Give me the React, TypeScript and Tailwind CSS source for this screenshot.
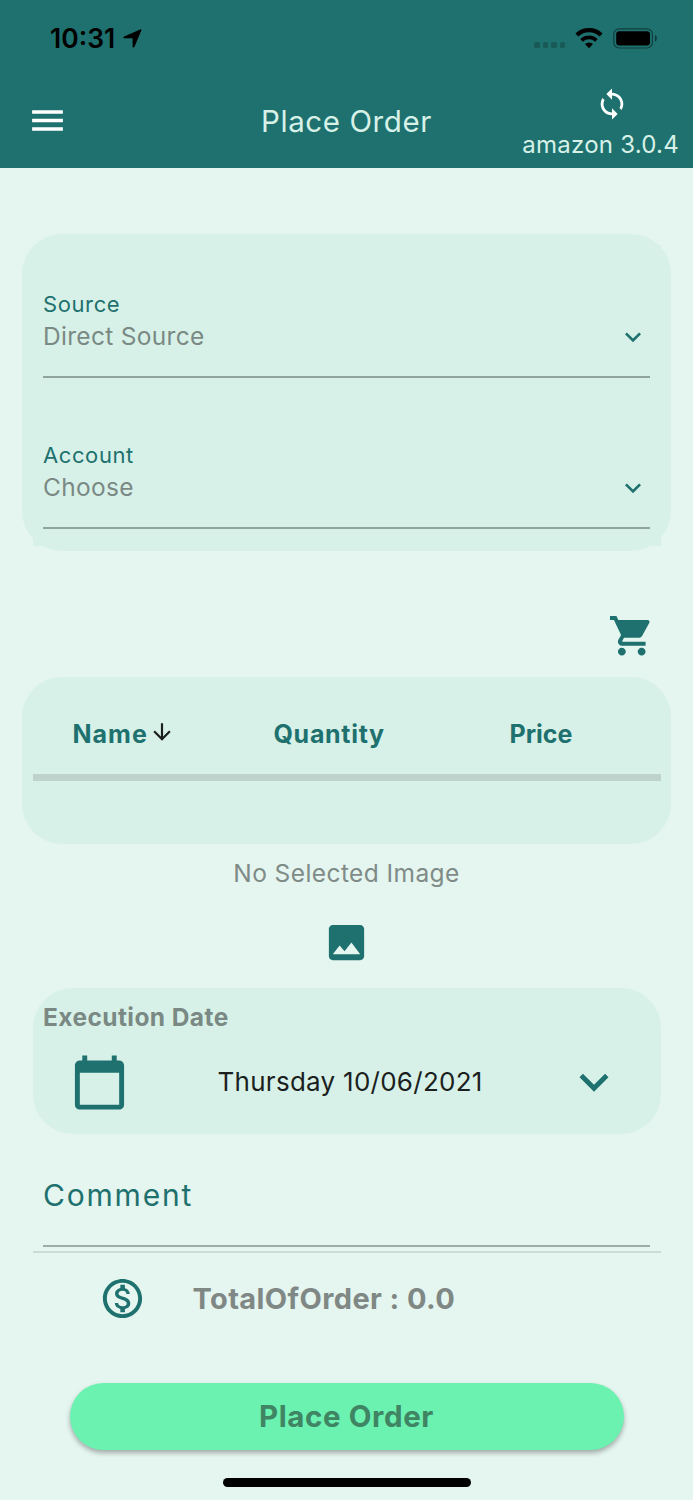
import React from 'react';
import {
  MdArrowDownward,
  MdCalendarToday,
  MdExpandMore,
  MdImage,
  MdMenu,
  MdOutlineMonetizationOn,
  MdShoppingCart,
  MdSync,
} from 'react-icons/md';

const StatusBar: React.FC = () => (
  <div className="flex h-[76px] items-center pl-[50px] pr-[35px]">
    <span className="text-[26.5px] leading-none font-semibold text-black">10:31</span>
    <svg className="ml-[8px]" width="19" height="19" viewBox="0 0 18 19">
      <path
        d="M16.6.4C17.5 0 18.2.7 17.8 1.6L11 17.8c-.5 1.1-1.9.9-1.9-.4V9.8c0-.4-.1-.5-.5-.5H1.1C-.2 9.3-.4 7.9.7 7.4z"
        fill="#000"
      />
    </svg>
    <div className="ml-auto flex items-center">
      <div className="mt-[13px] flex gap-[3px]">
        <i className="h-[6px] w-[5.5px] rounded-[1.5px] bg-black/20" />
        <i className="h-[6px] w-[5.5px] rounded-[1.5px] bg-black/20" />
        <i className="h-[6px] w-[5.5px] rounded-[1.5px] bg-black/20" />
        <i className="h-[6px] w-[5.5px] rounded-[1.5px] bg-black/20" />
      </div>
      <svg className="ml-[10px]" width="28" height="21" viewBox="0 0 28 21">
        <path d="M14 20.2l-4-4.1a6 6 0 0 1 8 0z" fill="#000" />
        <path d="M6.6 12.3a10.8 10.8 0 0 1 14.8 0" fill="none" stroke="#000" strokeWidth="3.8" />
        <path d="M1.9 7a17.4 17.4 0 0 1 24.2 0" fill="none" stroke="#000" strokeWidth="4.2" />
      </svg>
      <svg className="ml-[10px]" width="45" height="21" viewBox="0 0 45 21">
        <rect x="0.8" y="0.8" width="38.6" height="19.2" rx="5.5" fill="none" stroke="#000" strokeOpacity="0.45" strokeWidth="1.2" />
        <rect x="3.2" y="3.2" width="33.8" height="14.4" rx="3" fill="#000" />
        <path d="M42 7v6.8c2.4-1 2.4-5.8 0-6.8z" fill="#000" fillOpacity="0.5" />
      </svg>
    </div>
  </div>
);

type SelectFieldProps = {
  label: string;
  value: string;
};

const SelectField: React.FC<SelectFieldProps> = ({ label, value }) => (
  <div className="flex h-[151px] flex-col pt-[47px]">
    <div className="flex h-[24px] items-center text-[22px] leading-none tracking-[0.6px] text-[#1e716e]">
      {label}
    </div>
    <div className="flex h-[41px] items-center justify-between text-[24.5px] leading-none tracking-[0.3px] text-[#7a8984]">
      <span>{value}</span>
      <MdExpandMore className="mr-[1px] size-[32px] text-[#1e716e]" />
    </div>
    <div className="mt-[18.5px] h-[2px] shrink-0 bg-[#8fa49d]" />
  </div>
);

export default function App() {
  return (
    <div className="flex h-[1500px] w-[693px] flex-col overflow-hidden bg-[#e5f5ef] font-['Inter',sans-serif]">
      <header className="h-[167.5px] shrink-0 bg-[#1e716e]">
        <StatusBar />
        <div className="grid h-[90px] grid-cols-[1fr_200px_1fr]">
          <div className="pt-[24px] pl-[26.5px]">
            <MdMenu className="size-[41px] text-white" />
          </div>
          <h1 className="flex h-[91px] items-center justify-center text-[29.5px] leading-none tracking-[0.6px] text-[#d7f1e8]">
            <span>Place Order</span>
          </h1>
          <div className="flex flex-col items-end pt-[11px] pr-[14px]">
            <MdSync className="mr-[50px] size-[34px] text-white" />
            <span className="mt-[12px] text-[24px] leading-none tracking-[0.25px] whitespace-nowrap text-[#d7f1e8]">
              amazon 3.0.4
            </span>
          </div>
        </div>
      </header>

      <main className="flex flex-col">
        <section className="mx-[22px] mt-[66.5px] h-[317px] rounded-[40px] bg-[#d7f1e8] px-[10.5px] pt-[11px]">
          <div className="h-[301px] bg-[#d7f1e8] px-[10.5px]">
            <SelectField label="Source" value="Direct Source" />
            <SelectField label="Account" value="Choose" />
          </div>
        </section>

        <div className="flex h-[126px] justify-end pt-[61px] pr-[38px]">
          <MdShoppingCart className="size-[47.5px] text-[#1e716e]" />
        </div>

        <section className="mx-[22px] h-[166.5px] rounded-[40px] bg-[#d7f1e8] px-[10.5px]">
          <div className="flex h-[97px] items-center pt-[18px] pl-[40px] text-[25px] leading-none font-bold text-[#1e716e]">
            <div className="flex w-[201px] items-center">
              <span className="tracking-[1px]">Name</span>
              <MdArrowDownward className="mb-[5px] ml-[1.5px] size-[26px] text-[#1b1f1e]" />
            </div>
            <span className="w-[236px] tracking-[0.7px]">Quantity</span>
            <span>Price</span>
          </div>
          <div className="h-[7px] bg-[#bed3cb]" />
        </section>

        <div className="flex h-[60px] items-center justify-center text-[24.5px] leading-none tracking-[0.42px] text-[#7f8b87]">
          <span>No Selected Image</span>
        </div>
        <div className="flex h-[84.5px] justify-center pt-[15px]">
          <MdImage className="size-[47px] text-[#1e716e]" />
        </div>

        <section className="mx-[32.5px] h-[146px] rounded-[40px] bg-[#d7f1e8] pt-[18px] pl-[10.5px]">
          <div className="flex h-[23px] items-center text-[24.5px] leading-none font-bold tracking-[0.42px] text-[#7a8984]">
            <span>Execution Date</span>
          </div>
          <div className="flex h-[106px] items-center pl-[26.5px]">
            <MdCalendarToday className="size-[59px] text-[#1e716e]" />
            <span className="ml-[89px] w-[276px] text-[26px] leading-none tracking-[0.27px] whitespace-nowrap text-[#1b1f1e]">
              Thursday 10/06/2021
            </span>
            <MdExpandMore className="ml-[71px] size-[58px] text-[#1e716e]" />
          </div>
        </section>

        <div className="mx-[43px] flex h-[113px] items-center border-b-2 border-[#9cada7] pt-[11px] text-[30px] leading-none tracking-[1.8px] text-[#1e716e]">
          <span>Comment</span>
        </div>
        <div className="mx-[32.5px] mt-[4px] h-[2px] bg-[#cbdbd5]" />

        <div className="flex h-[90px] items-center pl-[99px] text-[29px] leading-none font-bold tracking-[0.4px] text-[#7f8884]">
          <MdOutlineMonetizationOn className="size-[47px] text-[#1e716e]" />
          <span className="ml-[46.5px]">TotalOfOrder : 0.0</span>
        </div>

        <button className="mx-[69.5px] mt-[40px] flex h-[67px] items-center justify-center rounded-full bg-[#6bf2b1] text-[29.5px] leading-none font-bold tracking-[0.6px] text-[#3f8463] shadow-[0_3px_5px_rgba(0,0,0,0.3)]">
          <span>Place Order</span>
        </button>
        <div className="mx-auto mt-[28px] h-[8.5px] w-[248px] rounded-full bg-black" />
      </main>
    </div>
  );
}
